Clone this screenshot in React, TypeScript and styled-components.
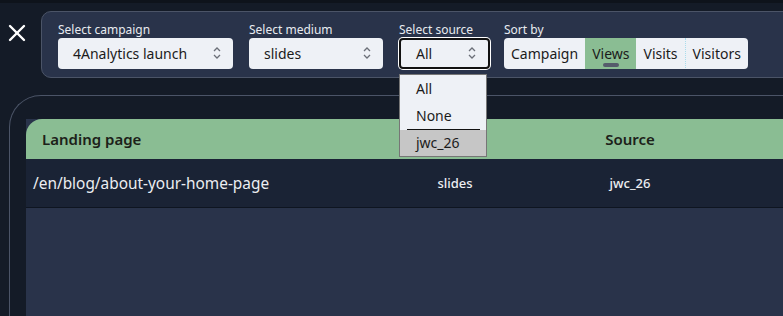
import React from "react";
import styled, { createGlobalStyle } from "styled-components";

const GlobalStyle = createGlobalStyle`
  html, body { margin: 0; padding: 0; }
  body {
    background: #141b27;
    font-family: "Noto Sans", "Open Sans", sans-serif;
    overflow: hidden;
  }
`;

const Page = styled.div`
  width: 783px;
  height: 316px;
  border-top: 3px solid #0e131b;
  box-sizing: border-box;
  display: flex;
  flex-direction: column;
  overflow: hidden;
`;

const TopBar = styled.div`
  display: flex;
  align-items: stretch;
  padding-top: 8px;
`;

const CloseButton = styled.button`
  width: 41px;
  border: none;
  background: transparent;
  padding: 0;
  display: flex;
  justify-content: center;
  align-items: flex-start;
  padding-top: 13px;
  padding-right: 8px;
  cursor: pointer;
`;

const FilterPanel = styled.div`
  flex: 1;
  display: flex;
  gap: 16px;
  height: 67px;
  box-sizing: border-box;
  padding: 11px 16px 8px 16px;
  margin-right: -20px;
  background: #29334a;
  border: 1px solid #4b5467;
  border-radius: 10px;
`;

const Field = styled.div<{ $pull?: number }>`
  position: relative;
  display: flex;
  flex-direction: column;
  margin-left: ${(p) => (p.$pull ? -p.$pull : 0)}px;
`;

const Label = styled.label`
  color: #e8ebf0;
  font-size: 12px;
  line-height: 14px;
  height: 15px;
`;

const SelectBox = styled.div<{ $width: number; $focused?: boolean }>`
  width: ${(p) => p.$width}px;
  height: 32px;
  box-sizing: border-box;
  background: #eef1f6;
  border-radius: 4px;
  display: flex;
  align-items: center;
  justify-content: space-between;
  padding: 0 11px 0 15px;
  color: #1b1b1b;
  font-size: 14px;
  border: ${(p) => (p.$focused ? "2px solid #111" : "none")};
  box-shadow: ${(p) => (p.$focused ? "0 0 0 1px #ffffff" : "none")};
`;

const Dropdown = styled.ul`
  position: absolute;
  top: 51px;
  left: 0;
  width: 88px;
  box-sizing: border-box;
  margin: 0;
  padding: 0;
  list-style: none;
  background: #eef1f6;
  border: 1px solid #767676;
  z-index: 10;
  font-size: 14px;
  color: #1b1b1b;
`;

const Option = styled.li<{ $highlight?: boolean }>`
  height: ${(p) => (p.$highlight ? 26 : 27)}px;
  line-height: ${(p) => (p.$highlight ? 26 : 27)}px;
  padding-left: 16px;
  background: ${(p) => (p.$highlight ? "#c6c6c6" : "transparent")};
`;

const Separator = styled.li`
  height: 1px;
  margin: 0 6px 0 7px;
  background: #111;
`;

const SortGroup = styled.div`
  display: flex;
  height: 32px;
  background: #eef1f6;
  border-radius: 4px;
  overflow: hidden;
`;

const SortButton = styled.button<{ $active?: boolean; $divider?: boolean }>`
  position: relative;
  border: none;
  border-left: ${(p) => (p.$divider ? "1px dotted #a9dcec" : "none")};
  background: ${(p) => (p.$active ? "#8abd93" : "transparent")};
  font-family: inherit;
  font-size: 14px;
  color: #1b1b1b;
  padding: 0 7px;
  height: 32px;
  cursor: pointer;
`;

const ActiveMark = styled.span`
  position: absolute;
  left: 50%;
  bottom: 3px;
  width: 16px;
  height: 4px;
  margin-left: -8px;
  border-radius: 2px;
  background: #555c6b;
`;

const Card = styled.div`
  flex: 1;
  margin: 17px 0 0 9px;
  border: 1px solid #4b5467;
  border-right: none;
  border-bottom: none;
  border-radius: 32px 0 0 0;
  padding: 23px 0 0 16px;
  display: flex;
  flex-direction: column;
`;

const Table = styled.div`
  flex: 1;
  display: flex;
  flex-direction: column;
  background: #29334a;
`;

const Row = styled.div<{ $head?: boolean }>`
  display: grid;
  grid-template-columns: 354px 150px 200px 1fr;
  align-items: center;
  height: ${(p) => (p.$head ? 40 : 48)}px;
  background: ${(p) => (p.$head ? "#8abd93" : "#1a2335")};
  border-top-left-radius: ${(p) => (p.$head ? 16 : 0)}px;
  border-bottom: ${(p) => (p.$head ? "none" : "1px solid #0e1521")};
`;

const HeadCell = styled.div<{ $left?: boolean }>`
  font-size: 15px;
  font-weight: 600;
  color: #1c2119;
  text-align: ${(p) => (p.$left ? "left" : "center")};
  padding-left: ${(p) => (p.$left ? 16 : 0)}px;
`;

const Cell = styled.div<{ $path?: boolean }>`
  font-size: ${(p) => (p.$path ? 15.4 : 13)}px;
  font-weight: ${(p) => (p.$path ? 400 : 500)};
  color: #eceef2;
  text-align: ${(p) => (p.$path ? "left" : "center")};
  padding-left: ${(p) => (p.$path ? 7 : 0)}px;
`;

const Chevrons = () => (
  <svg width="10" height="14" viewBox="0 0 10 14" fill="none" stroke="#6b6f78" strokeWidth="1.3">
    <path d="M2 5 L5 2 L8 5" />
    <path d="M2 9 L5 12 L8 9" />
  </svg>
);

const CloseIcon = () => (
  <svg width="18" height="18" viewBox="0 0 18 18" stroke="#ffffff" strokeWidth="2.4" strokeLinecap="round">
    <path d="M2 2 L16 16" />
    <path d="M16 2 L2 16" />
  </svg>
);

export default function App() {
  return (
    <>
      <GlobalStyle />
      <Page>
        <TopBar>
          <CloseButton aria-label="Close">
            <CloseIcon />
          </CloseButton>
          <FilterPanel>
            <Field>
              <Label>Select campaign</Label>
              <SelectBox $width={175}>
                4Analytics launch
                <Chevrons />
              </SelectBox>
            </Field>
            <Field>
              <Label>Select medium</Label>
              <SelectBox $width={134}>
                slides
                <Chevrons />
              </SelectBox>
            </Field>
            <Field>
              <Label>Select source</Label>
              <SelectBox $width={91} $focused>
                All
                <Chevrons />
              </SelectBox>
              <Dropdown>
                <Option>All</Option>
                <Option>None</Option>
                <Separator />
                <Option $highlight>jwc_26</Option>
              </Dropdown>
            </Field>
            <Field $pull={2}>
              <Label>Sort by</Label>
              <SortGroup>
                <SortButton>Campaign</SortButton>
                <SortButton $active>
                  Views
                  <ActiveMark />
                </SortButton>
                <SortButton>Visits</SortButton>
                <SortButton $divider>Visitors</SortButton>
              </SortGroup>
            </Field>
          </FilterPanel>
        </TopBar>
        <Card>
          <Table>
            <Row $head>
              <HeadCell $left>Landing page</HeadCell>
              <HeadCell />
              <HeadCell>Source</HeadCell>
              <HeadCell />
            </Row>
            <Row>
              <Cell $path>/en/blog/about-your-home-page</Cell>
              <Cell>slides</Cell>
              <Cell>jwc_26</Cell>
              <Cell />
            </Row>
          </Table>
        </Card>
      </Page>
    </>
  );
}
